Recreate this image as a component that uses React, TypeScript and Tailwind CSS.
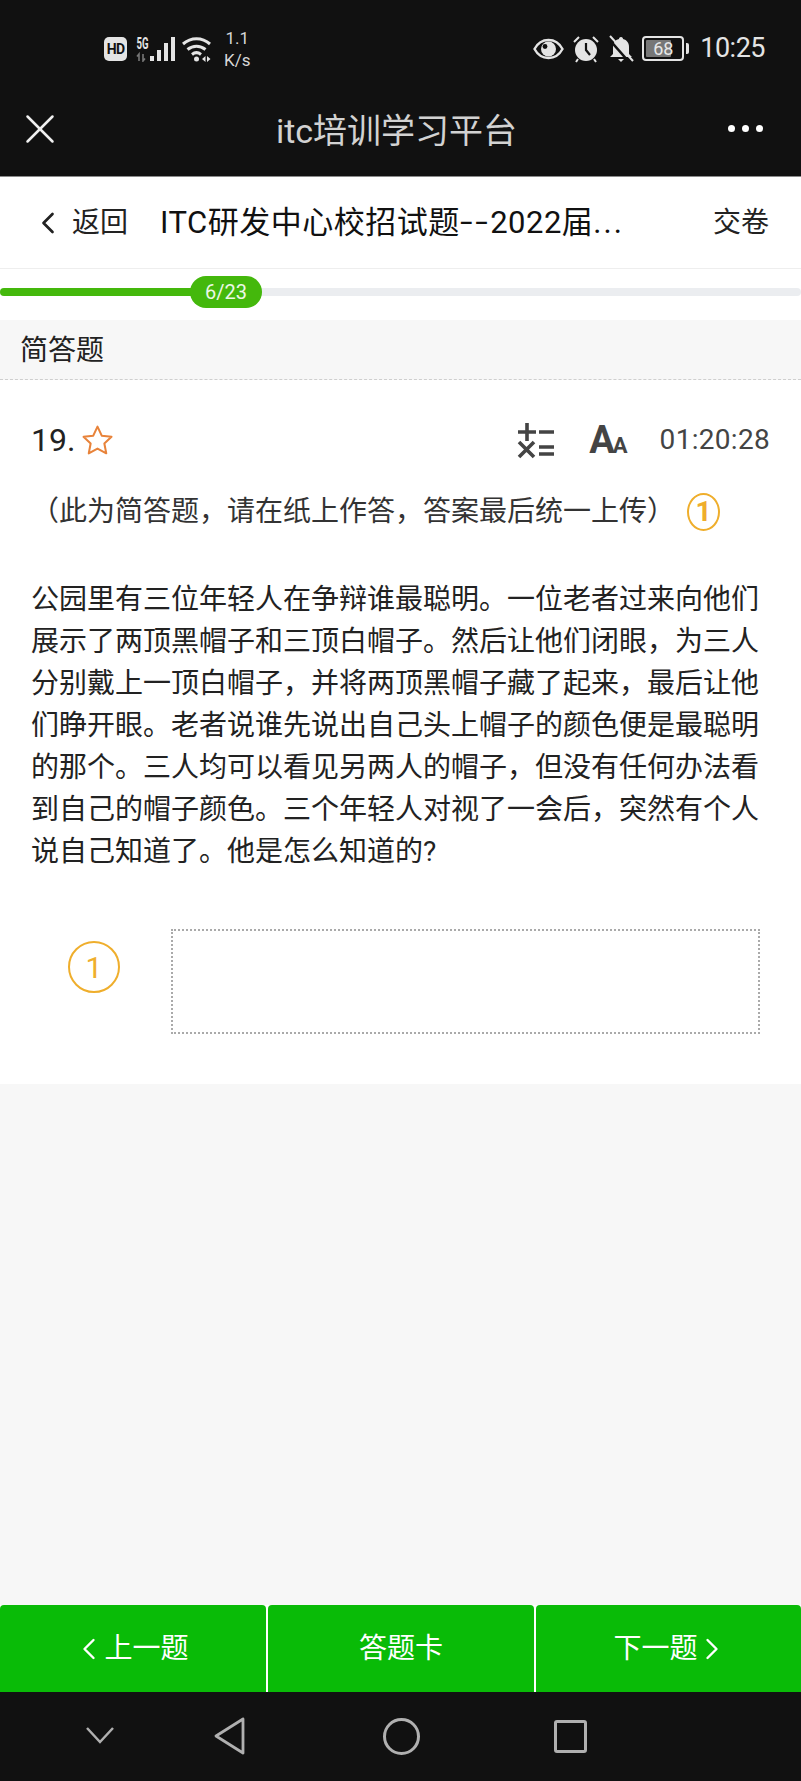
import { ChevronLeft, ChevronRight, X } from "lucide-react";

// full-width punctuation is written as escapes so editors don't normalise it
const QUESTION_HINT = "\uFF08此为简答题\uFF0C请在纸上作答\uFF0C答案最后统一上传\uFF09";
const QUESTION_TEXT =
  "公园里有三位年轻人在争辩谁最聪明。一位老者过来向他们展示了两顶黑帽子和三顶白帽子。然后让他们闭眼\uFF0C为三人分别戴上一顶白帽子\uFF0C并将两顶黑帽子藏了起来\uFF0C最后让他们睁开眼。老者说谁先说出自己头上帽子的颜色便是最聪明的那个。三人均可以看见另两人的帽子\uFF0C但没有任何办法看到自己的帽子颜色。三个年轻人对视了一会后\uFF0C突然有个人说自己知道了。他是怎么知道的?";

function StatusLeft() {
  return (
    <div className="flex items-center text-[#e4e4e4]">
      <div className="w-[23px] h-[24px] rounded-[5px] bg-[#e4e4e4] flex items-center justify-center text-[#111] text-[14px] leading-none font-bold tracking-[-0.8px] font-['Roboto',sans-serif]">
        HD
      </div>
      {/* mobile signal */}
      <svg width="40" height="26" viewBox="0 0 40 26" className="ml-[9px]" fill="currentColor">
        <text x="0.500" y="13" fontSize="16" fontWeight="700" fontFamily="Roboto, sans-serif" textLength="12" lengthAdjust="spacingAndGlyphs">5G</text>
        <path d="M3 25v-7l-2 2.500M7 18v7l2-2.500" stroke="#777" strokeWidth="1.600" fill="none" />
        <rect x="14" y="20" width="4" height="5" />
        <rect x="21" y="14" width="4" height="11" />
        <rect x="28" y="7" width="4" height="18" />
        <rect x="35" y="1" width="4" height="24" />
      </svg>
      {/* wifi */}
      <svg width="30" height="26" viewBox="0 0 30 26" className="ml-[6px]" fill="none" stroke="currentColor" strokeWidth="3">
        <path d="M1 8c8-7 19-7 27 0" />
        <path d="M5.500 13.500c5.500-4.500 12.500-4.500 18 0" />
        <path d="M10 18.500c3-2.500 6-2.500 9 0" />
        <circle cx="14.500" cy="23" r="2.500" fill="currentColor" stroke="none" />
        <path d="M23.500 20l-3.500 3 3.500 3zM25 20l3.500 3-3.500 3z" fill="currentColor" stroke="none" />
      </svg>
      <div className="ml-[12px] flex flex-col items-center text-[17px] leading-[22px] text-[#d8d8d8] font-['Roboto',sans-serif]">
        <span>1.1</span>
        <span>K/s</span>
      </div>
    </div>
  );
}

function StatusRight() {
  return (
    <div className="flex items-center text-[#e4e4e4]">
      {/* eye */}
      <svg width="31" height="24" viewBox="0 0 31 24">
        <path d="M1.500 12C5 5.500 10 3 15.500 3S26 5.500 29.500 12C26 18.500 21 21 15.500 21S5 18.500 1.500 12z" fill="none" stroke="currentColor" strokeWidth="2.400" />
        <circle cx="15.500" cy="12" r="7.500" fill="currentColor" />
        <circle cx="12" cy="9.500" r="2.400" fill="#111" />
      </svg>
      {/* alarm */}
      <svg width="28" height="28" viewBox="0 0 28 28" className="ml-[8px]">
        <circle cx="14" cy="15" r="11" fill="currentColor" />
        <path d="M14 8v7l4 5" fill="none" stroke="#111" strokeWidth="2.200" />
        <path d="M2 7l5-5M26 7l-5-5M6 24l-2 3M22 24l2 3" stroke="currentColor" strokeWidth="2" />
      </svg>
      {/* muted bell */}
      <svg width="26" height="28" viewBox="0 0 26 28" className="ml-[8px]">
        <path d="M13 2c-1.500 0-2 1-2 2-4 1-6 4-6 8v7l-3 3h22l-3-3v-7c0-4-2-7-6-8 0-1-.500-2-2-2z" fill="currentColor" />
        <path d="M10 24h6l-3 3z" fill="currentColor" />
        <path d="M0 3l22 25" stroke="#111" strokeWidth="2.500" />
        <path d="M2 1l23 25" stroke="currentColor" strokeWidth="2" />
      </svg>
      {/* battery */}
      <div className="ml-[8px] flex items-center">
        <div className="relative w-[42px] h-[25px] rounded-[4px] border-2 border-[#e4e4e4] overflow-hidden flex items-center justify-center">
          <div className="absolute left-[2px] top-[2px] bottom-[2px] w-[25px] bg-[#777] rounded-[1px]" />
          <span className="relative text-[18px] leading-none text-[#e8e8e8] font-['Roboto',sans-serif]">68</span>
        </div>
        <div className="ml-[2px] w-[3px] h-[11px] rounded-r-[2px] bg-[#e4e4e4]" />
      </div>
      <span className="ml-[11px] text-[27px] leading-none tracking-[-0.5px] text-[#e4e4e4] font-['Roboto',sans-serif]">10:25</span>
    </div>
  );
}

function NumberBadge({ className }: { className: string }) {
  return (
    <div className={`rounded-[50%] shrink-0 flex items-center justify-center text-[#efae2c] border-[#efae2c] ${className}`}>
      1
    </div>
  );
}

export default function App() {
  return (
    <div className="w-[801px] h-[1781px] flex flex-col bg-[#f7f7f7] font-['Roboto','Noto_Sans_CJK_SC',sans-serif] overflow-hidden">
      {/* Phone status bar + webview title bar */}
      <div className="h-[176px] bg-[#111111] shrink-0 flex flex-col">
        <div className="h-[100px] pb-[3px] pl-[104px] pr-[36px] flex items-center justify-between">
          <StatusLeft />
          <StatusRight />
        </div>
        <div className="relative h-[62px] pr-[8px] flex items-center justify-center">
          <X className="absolute left-[15px] top-[4px] text-[#f0f0f0]" size={50} strokeWidth={1.2} />
          <span className="text-[34px] leading-none text-[#d2d2d2]">itc培训学习平台</span>
          <div className="absolute right-[38px] top-[25px] flex gap-[7px]">
            <span className="w-[7px] h-[7px] rounded-full bg-white" />
            <span className="w-[7px] h-[7px] rounded-full bg-white" />
            <span className="w-[7px] h-[7px] rounded-full bg-white" />
          </div>
        </div>
      </div>
      <div className="h-px bg-[#8a8a8a] shrink-0" />

      {/* Exam header */}
      <div className="h-[92px] bg-white border-b border-[#eeeeee] shrink-0 flex items-center pl-[30px] pr-[32px] text-black">
        <ChevronLeft size={36} strokeWidth={1.8} className="text-[#222]" />
        <span className="ml-[6px] text-[28px] text-[#222]">返回</span>
        <span className="ml-[32px] flex-1 text-[31px] tracking-[0.5px] text-[#111] whitespace-nowrap">
          ITC研发中心校招试题<span className="text-[46px] leading-none font-light tracking-[2px] align-[-4px]">--</span>2022届<span className="tracking-[2px]">...</span>
        </span>
        <span className="text-[28px] text-[#222]">交卷</span>
      </div>

      {/* Progress */}
      <div className="h-[51px] bg-white shrink-0 flex items-center">
        <div className="relative w-full h-[8px] rounded-full bg-[#ebedf0] -mt-[5px]">
          <div className="h-full w-[200px] rounded-full bg-[#44b80c]" />
          <div className="absolute left-[190px] -top-[12px] w-[72px] h-[32px] rounded-full bg-[#44b80c] text-white/90 text-[20px] leading-[32px] text-center">
            6/23
          </div>
        </div>
      </div>

      {/* Section title */}
      <div className="h-[60px] bg-[#f7f7f7] border-b border-dashed border-[#cfcfcf] shrink-0 flex items-center pl-[20px] pt-[3px] text-[28px] text-[#222]">
        简答题
      </div>

      {/* Question */}
      <div className="h-[704px] bg-white shrink-0 px-[31px]">
        <div className="h-[120px] flex items-center justify-between -mr-[29px] pr-[29px]">
          <div className="flex items-center">
            <span className="text-[32px] text-[#222]">19.</span>
            <svg width="35" height="35" viewBox="0 0 24 24" fill="none" stroke="#e8833a" strokeWidth="1.400" strokeLinejoin="round" className="ml-[5px]">
              <path d="M12 2.500l2.900 6.200 6.700.8-4.900 4.600 1.300 6.700L12 17.500l-6 3.300 1.300-6.700L2.400 9.500l6.700-.8z" />
            </svg>
          </div>
          <div className="flex items-center">
            {/* calculator symbols */}
            <svg width="38" height="38" viewBox="0 0 38 38" stroke="#444" strokeWidth="3.600" fill="none">
              <path d="M1 11h18M10 2v18M22 11h15M22 26h15M22 33h15M2 21l15 15M17 21L2 36" />
            </svg>
            <span className="ml-[34px] text-[38px] leading-none font-bold text-[#444] tracking-[-2px]">A<span className="text-[22px] tracking-normal">A</span></span>
            <span className="ml-[32px] text-[28px] text-[#444] tracking-[0.3px]">01:20:28</span>
          </div>
        </div>

        <div className="flex items-center h-[40px] -mt-[8px] text-[28px] text-[#333]">
          <span>{QUESTION_HINT}</span>
          <NumberBadge className="ml-[12px] w-[33px] h-[38px] border-2 text-[28px] font-bold" />
        </div>

        <p className="mt-[47px] w-[730px] text-[28px] leading-[42px] text-[#222]">{QUESTION_TEXT}</p>

        <div className="mt-[56px] flex items-start">
          <NumberBadge className="ml-[37px] mt-[12px] w-[52px] h-[52px] border-2 text-[30px]" />
          <div className="ml-[51px] w-[589px] h-[105px] border-2 border-dotted border-[#aaaaaa] bg-white" />
        </div>
      </div>

      <div className="flex-1" />

      {/* Question navigation */}
      <div className="h-[87px] shrink-0 flex justify-between bg-white text-white text-[28px]">
        <button className="w-[266px] pr-[6px] rounded-t-[4px] bg-[#09bb07] flex items-center justify-center">
          <ChevronLeft size={36} strokeWidth={1.6} className="-mr-[3px]" />
          <span>上一题</span>
        </button>
        <button className="w-[266px] rounded-t-[4px] bg-[#09bb07] flex items-center justify-center">
          <span>答题卡</span>
        </button>
        <button className="w-[265px] pl-[6px] rounded-t-[4px] bg-[#09bb07] flex items-center justify-center">
          <span>下一题</span>
          <ChevronRight size={36} strokeWidth={1.6} className="-ml-[4px]" />
        </button>
      </div>

      {/* System navigation */}
      <div className="h-[89px] shrink-0 bg-[#111111] flex items-start text-[#b0b0b0]">
        <svg width="28" height="26" viewBox="0 0 28 26" fill="none" stroke="currentColor" strokeWidth="2.500" className="ml-[86px] mt-[33px]">
          <path d="M1 3l13 14L27 3" />
        </svg>
        <svg width="32" height="38" viewBox="0 0 32 38" fill="none" stroke="currentColor" strokeWidth="2.800" strokeLinejoin="round" className="ml-[100px] mt-[25px]">
          <path d="M29 2L2 19l27 17z" />
        </svg>
        <div className="ml-[137px] mt-[26px] w-[37px] h-[37px] rounded-full border-[3px] border-[#b0b0b0]" />
        <div className="ml-[134px] mt-[28px] w-[33px] h-[33px] rounded-[3px] border-[3px] border-[#b0b0b0]" />
      </div>
    </div>
  );
}
